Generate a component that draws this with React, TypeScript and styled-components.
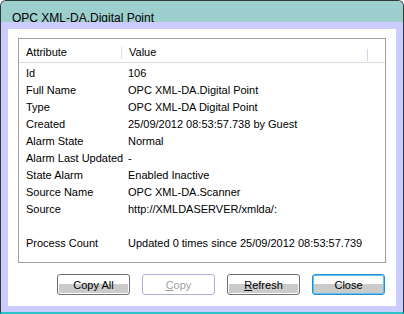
import React from "react";
import styled, { createGlobalStyle } from "styled-components";

const GlobalStyle = createGlobalStyle`
  html, body {
    margin: 0;
    padding: 0;
    background: #ffffff;
  }
  body {
    font-family: "Liberation Sans", Arial, sans-serif;
    font-size: 11px;
    color: #000000;
  }
`;

interface Attr {
  name: string;
  value: string;
}

const ATTRIBUTES: Attr[] = [
  { name: "Id", value: "106" },
  { name: "Full Name", value: "OPC XML-DA.Digital Point" },
  { name: "Type", value: "OPC XML-DA Digital Point" },
  { name: "Created", value: "25/09/2012 08:53:57.738 by Guest" },
  { name: "Alarm State", value: "Normal" },
  { name: "Alarm Last Updated", value: "-" },
  { name: "State Alarm", value: "Enabled Inactive" },
  { name: "Source Name", value: "OPC XML-DA.Scanner" },
  { name: "Source", value: "http://XMLDASERVER/xmlda/:" },
  { name: "", value: "" },
  { name: "Process Count", value: "Updated 0 times since 25/09/2012 08:53:57.739" },
];

export default function App() {
  return (
    <>
      <GlobalStyle />
      <Window>
        <TitleBar>
          <Title>OPC XML-DA.Digital Point</Title>
        </TitleBar>
        <Frame>
          <Client>
            <ListBox>
              <Header>
                <HeaderCell $divider>Attribute</HeaderCell>
                <HeaderCell $divider $tint>
                  Value
                </HeaderCell>
                <HeaderCell />
              </Header>
              <Rows>
                {ATTRIBUTES.map((a, i) => (
                  <Row key={i}>
                    <NameCell>{a.name}</NameCell>
                    <ValueCell>{a.value}</ValueCell>
                  </Row>
                ))}
              </Rows>
            </ListBox>
            <ButtonRow>
              <Button>Copy All</Button>
              <Button $variant="disabled">
                <u>C</u>opy
              </Button>
              <Button>
                <u>R</u>efresh
              </Button>
              <Button $variant="default">Close</Button>
            </ButtonRow>
          </Client>
        </Frame>
      </Window>
    </>
  );
}

const Window = styled.div`
  width: 404px;
  height: 314px;
  box-sizing: border-box;
  display: flex;
  flex-direction: column;
  border: 1px solid #2e3a3a;
  border-bottom: 2px solid #2cc4c8;
  border-radius: 6px 6px 0 0;
  background: #ccccff;
  overflow: hidden;
`;

const TitleBar = styled.div`
  height: 21px;
  flex-shrink: 0;
  background: #9dcfcf;
  padding-left: 11px;
`;

const Title = styled.div`
  padding-top: 10px;
  font-size: 12px;
  line-height: 14px;
  white-space: nowrap;
`;

const Frame = styled.div`
  flex: 1;
  display: flex;
  padding: 7px 7px 6px 7px;
  background: #ccccff;
`;

const Client = styled.div`
  flex: 1;
  display: flex;
  flex-direction: column;
  background: #ffffff;
  padding: 9px 10px 11px 10px;
`;

const ListBox = styled.div`
  height: 225px;
  box-sizing: border-box;
  border: 1px solid #a0a0a0;
  display: flex;
  flex-direction: column;
`;

const Header = styled.div`
  display: grid;
  grid-template-columns: 103px 246px 1fr;
  height: 24px;
  box-sizing: border-box;
  border-bottom: 1px solid #dcdcdc;
`;

const HeaderCell = styled.div<{ $divider?: boolean; $tint?: boolean }>`
  position: relative;
  padding: 5px 0 0 7px;
  line-height: 17px;
  &::after {
    content: "";
    display: ${(p) => (p.$divider ? "block" : "none")};
    position: absolute;
    right: 0;
    top: ${(p) => (p.$tint ? "10px" : "8px")};
    width: 1px;
    height: ${(p) => (p.$tint ? "12px" : "12px")};
    background: ${(p) => (p.$tint ? "#c8d8ee" : "#e0e0e0")};
  }
`;

const Rows = styled.div`
  padding-top: 2px;
`;

const Row = styled.div`
  display: grid;
  grid-template-columns: 103px 1fr;
  height: 17px;
  line-height: 17px;
  white-space: nowrap;
`;

const NameCell = styled.div`
  padding-left: 7px;
`;

const ValueCell = styled.div`
  padding-left: 6px;
`;

const ButtonRow = styled.div`
  display: flex;
  justify-content: flex-end;
  gap: 12px;
  margin-top: 11px;
  padding-right: 1px;
`;

const Button = styled.div<{ $variant?: "disabled" | "default" }>`
  width: 73px;
  height: 21px;
  box-sizing: border-box;
  display: flex;
  align-items: center;
  justify-content: center;
  border-radius: 3px;
  font-size: 11px;
  border: 1px solid
    ${(p) =>
      p.$variant === "disabled"
        ? "#adb2d8"
        : p.$variant === "default"
        ? "#2b8ccf"
        : "#707070"};
  color: ${(p) => (p.$variant === "disabled" ? "#a0a0a0" : "#000000")};
  background: ${(p) =>
    p.$variant === "disabled"
      ? "#ffffff"
      : "linear-gradient(to bottom, #ffffff 0, #ffffff 50%, #cbcbcb 50%, #cbcbcb 100%)"};
  box-shadow: inset 0 0 0 1px
    ${(p) => (p.$variant === "default" ? "#5ac4ee" : "#ffffff")};
  user-select: none;
  u {
    text-decoration: underline;
  }
`;
